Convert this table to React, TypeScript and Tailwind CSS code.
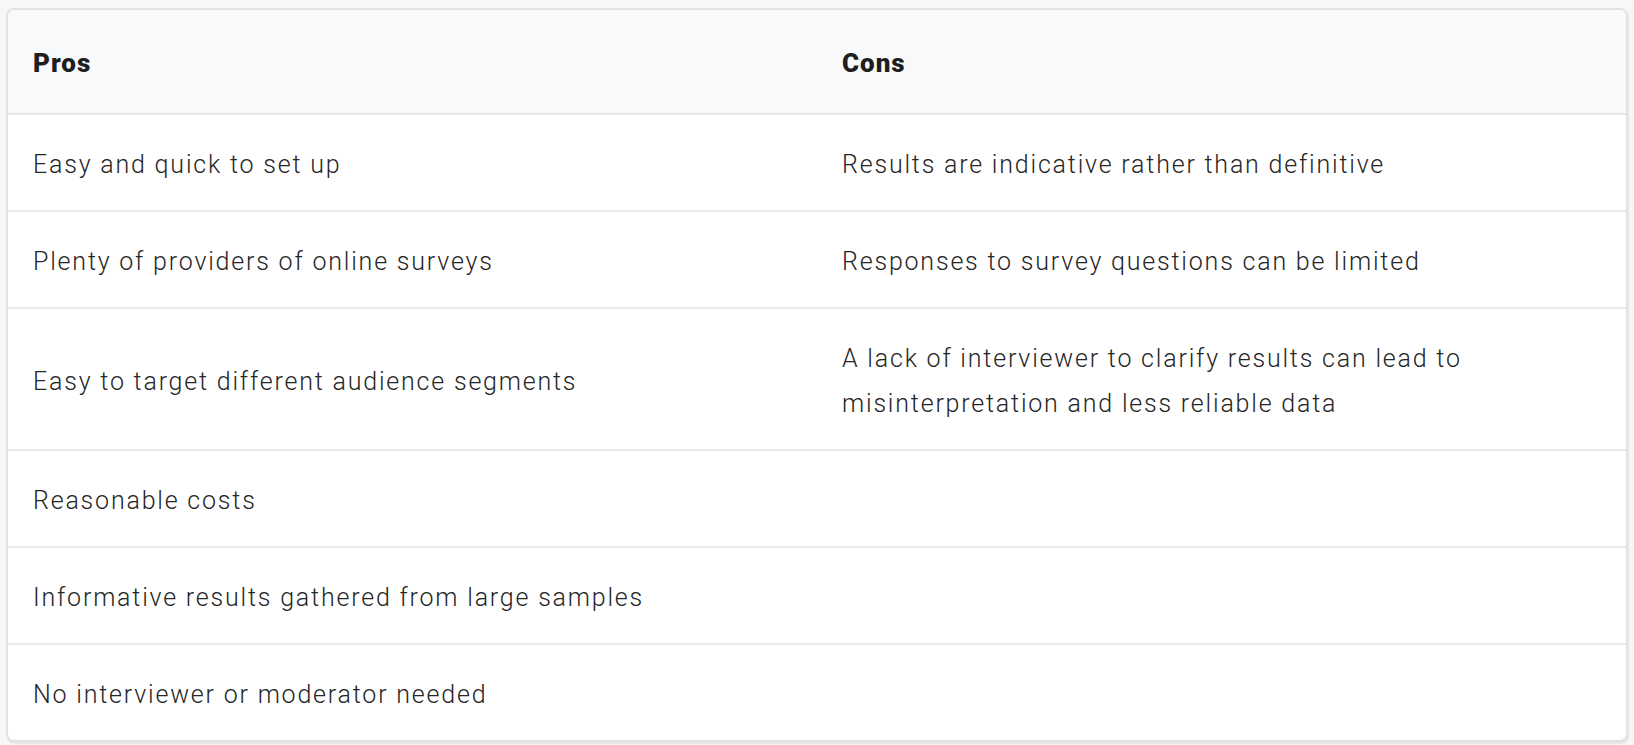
const rows: [string, string][] = [
  ["Easy and quick to set up", "Results are indicative rather than definitive"],
  ["Plenty of providers of online surveys", "Responses to survey questions can be limited"],
  [
    "Easy to target different audience segments",
    "A lack of interviewer to clarify results can lead to misinterpretation and less reliable data",
  ],
  ["Reasonable costs", ""],
  ["Informative results gathered from large samples", ""],
  ["No interviewer or moderator needed", ""],
];

export default function App() {
  return (
    <div className="min-h-[745px] bg-[#f7f7f7] px-[6px] pt-[8px] font-['Roboto','Liberation_Sans',sans-serif]">
      <div className="overflow-hidden rounded-[8px] border-2 border-[#e2e2e2] bg-white shadow-[1px_2px_2px_rgba(0,0,0,0.08)]">
        <table className="w-full table-fixed border-collapse text-left">
          <thead>
            <tr className="bg-[#f8f9fa]">
              <th className="h-[104px] border-b-2 border-[#e6e6e6] px-[25px] pt-[4px] text-[26px] font-black tracking-[1px] text-[#1e1e1e]">
                Pros
              </th>
              <th className="border-b-2 border-[#e6e6e6] px-[25px] pt-[4px] text-[26px] font-black tracking-[1px] text-[#1e1e1e]">
                Cons
              </th>
            </tr>
          </thead>
          <tbody>
            {rows.map(([pro, con], i) => (
              <tr
                key={i}
                className={i < rows.length - 1 ? "border-b-2 border-[#e9e9e9]" : ""}
              >
                <td className="px-[25px] pt-[27px] pb-[23px] align-middle text-[25px] leading-[45px] font-light tracking-[1.8px] text-[#262626]">
                  {pro}
                </td>
                <td className="px-[25px] pt-[27px] pb-[23px] align-middle text-[25px] leading-[45px] font-light tracking-[1.8px] text-[#262626]">
                  {con}
                </td>
              </tr>
            ))}
          </tbody>
        </table>
      </div>
    </div>
  );
}
